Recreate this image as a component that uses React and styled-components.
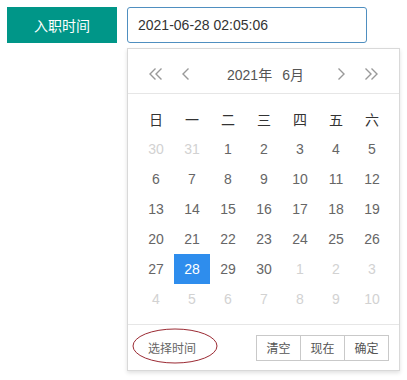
import React from 'react';
import styled, { createGlobalStyle } from 'styled-components';

const GlobalStyle = createGlobalStyle`
  html, body {
    margin: 0;
    padding: 0;
    background: #fff;
  }
  body {
    font-family: "Liberation Sans", "Noto Sans CJK SC", sans-serif;
    font-size: 14px;
    color: #666;
  }
`;

const weekdays = ['日', '一', '二', '三', '四', '五', '六'];

const days = [
  [30, 31, 1, 2, 3, 4, 5],
  [6, 7, 8, 9, 10, 11, 12],
  [13, 14, 15, 16, 17, 18, 19],
  [20, 21, 22, 23, 24, 25, 26],
  [27, 28, 29, 30, 1, 2, 3],
  [4, 5, 6, 7, 8, 9, 10],
];

const isOther = (row, day) => (row === 0 && day > 20) || (row >= 4 && day < 15);

// thin chevron arrows like layui's iconfont
const Chevron = ({ dir, double }) => {
  const w = double ? 13 : 7;
  return (
    <svg width={w} height="12" viewBox={`0 0 ${w} 12`}>
      <g
        fill="none"
        stroke="#999"
        strokeWidth="1.4"
        transform={dir === 'right' ? `scale(-1,1) translate(-${w},0)` : undefined}
      >
        <polyline points="6.5,0.5 1,6 6.5,11.5" />
        {double && <polyline points="12.5,0.5 7,6 12.5,11.5" />}
      </g>
    </svg>
  );
};

const App = () => {
  return (
    <>
      <GlobalStyle />
      <Page>
        <FormRow>
          <Label>入职时间</Label>
          <Field>
            <Input>2021-06-28 02:05:06</Input>
            <Picker>
              <Header>
                <NavGroup>
                  <NavButton><Chevron dir="left" double /></NavButton>
                  <NavButton><Chevron dir="left" /></NavButton>
                </NavGroup>
                <Title>
                  <span>2021年</span>
                  <span>6月</span>
                </Title>
                <NavGroup>
                  <NavButton><Chevron dir="right" /></NavButton>
                  <NavButton><Chevron dir="right" double /></NavButton>
                </NavGroup>
              </Header>
              <Content>
                <Grid>
                  {weekdays.map((w) => (
                    <WeekCell key={w}>{w}</WeekCell>
                  ))}
                  {days.map((row, r) =>
                    row.map((d, c) => (
                      <DayCell
                        key={`${r}-${c}`}
                        $other={isOther(r, d)}
                        $active={r === 4 && d === 28}
                      >
                        {d}
                      </DayCell>
                    ))
                  )}
                </Grid>
              </Content>
              <Footer>
                <TimeToggle>
                  选择时间
                  <Ring viewBox="0 0 86 36">
                    <ellipse cx="43" cy="18" rx="42" ry="17" fill="none" stroke="#9b2a33" strokeWidth="1" />
                  </Ring>
                </TimeToggle>
                <Actions>
                  <ActionButton>清空</ActionButton>
                  <ActionButton>现在</ActionButton>
                  <ActionButton>确定</ActionButton>
                </Actions>
              </Footer>
            </Picker>
          </Field>
        </FormRow>
      </Page>
    </>
  );
};

export default App;

const Page = styled.div`
  width: 407px;
  height: 380px;
  padding: 7px;
  box-sizing: border-box;
`;

const FormRow = styled.div`
  display: flex;
  gap: 10px;
`;

const Label = styled.div`
  width: 110px;
  height: 36px;
  background: #009688;
  color: #fff;
  display: flex;
  align-items: center;
  justify-content: center;
  font-size: 14px;
`;

const Field = styled.div`
  position: relative;
  width: 240px;
`;

const Input = styled.div`
  height: 36px;
  box-sizing: border-box;
  border: 1px solid #4f8fc0;
  border-radius: 3px;
  padding: 0 10px;
  display: flex;
  align-items: center;
  color: #333;
  font-size: 14px;
`;

const Picker = styled.div`
  position: absolute;
  top: 41px;
  left: 0;
  width: 273px;
  box-sizing: border-box;
  background: #fff;
  border: 1px solid #d9d9d9;
  box-shadow: 0 2px 4px rgba(0, 0, 0, 0.12);
`;

const Header = styled.div`
  height: 45px;
  box-sizing: border-box;
  padding: 10px 21px 5px 21px;
  border-bottom: 1px solid #e6e6e6;
  display: flex;
  align-items: center;
  justify-content: space-between;
`;

const NavGroup = styled.div`
  display: flex;
  align-items: center;
  gap: 20px;
`;

const NavButton = styled.span`
  display: flex;
  align-items: center;
  height: 30px;
`;

const Title = styled.div`
  display: flex;
  gap: 10px;
  font-size: 14px;
  color: #555;
  margin-left: 4px;
`;

const Content = styled.div`
  padding: 10px 10px;
  border-bottom: 1px solid #e6e6e6;
`;

const Grid = styled.div`
  display: grid;
  grid-template-columns: repeat(7, 36px);
  grid-auto-rows: 30px;
`;

const WeekCell = styled.div`
  display: flex;
  align-items: center;
  justify-content: center;
  color: #333;
  font-size: 14px;
`;

const DayCell = styled.div`
  display: flex;
  align-items: center;
  justify-content: center;
  font-size: 14px;
  color: ${(p) => (p.$active ? '#fff' : p.$other ? '#d2d2d2' : '#666')};
  background: ${(p) => (p.$active ? '#2e8ded' : 'transparent')};
`;

const Footer = styled.div`
  height: 45px;
  padding: 0 10px;
  display: flex;
  align-items: center;
  justify-content: space-between;
`;

const TimeToggle = styled.div`
  position: relative;
  font-size: 12px;
  color: #666;
  padding-left: 10px;
`;

const Ring = styled.svg`
  position: absolute;
  left: -6px;
  top: -11px;
  width: 86px;
  height: 36px;
  overflow: visible;
`;

const Actions = styled.div`
  display: flex;
`;

const ActionButton = styled.div`
  width: 45px;
  height: 26px;
  box-sizing: border-box;
  border: 1px solid #c9c9c9;
  margin-left: -1px;
  display: flex;
  align-items: center;
  justify-content: center;
  font-size: 12px;
  color: #555;
  background: #fff;
`;
